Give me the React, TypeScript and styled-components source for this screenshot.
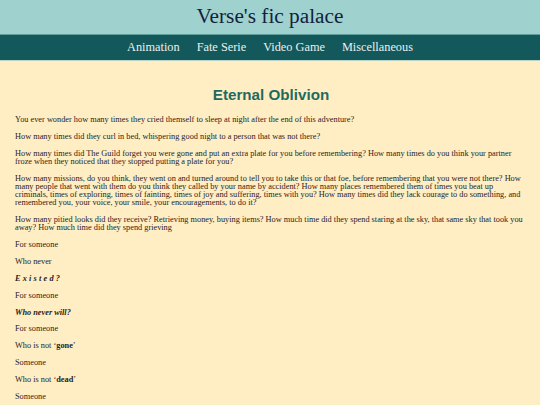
import React from 'react'
import styled, { createGlobalStyle } from 'styled-components'

const GlobalStyle = createGlobalStyle`
  html, body {
    margin: 0;
    padding: 0;
    background: #ffeec4;
  }
`

const Page = styled.div`
  width: 540px;
  min-height: 405px;
  background: #ffeec4;
  font-family: 'Liberation Serif', 'Times New Roman', serif;
`

const Header = styled.header`
  height: 35px;
  background: #9fd1cf;
  border-bottom: 1px solid #5f9d9a;
  display: flex;
  align-items: center;
  justify-content: center;
  box-sizing: border-box;
`

const SiteTitle = styled.h1`
  margin: 0;
  font-size: 21.3px;
  font-weight: normal;
  color: #13213d;
  line-height: 1;
`

const Nav = styled.nav`
  height: 26px;
  background: #13585a;
  display: flex;
  align-items: center;
  justify-content: center;
  gap: 17px;
  border-bottom: 1px solid #b9d2c4;
  box-sizing: border-box;
`

const NavLink = styled.a`
  color: #e9f1ef;
  font-size: 12.3px;
  text-decoration: none;
  cursor: pointer;
`

const Main = styled.main`
  padding: 24px 13px 0 15px;
`

const Title = styled.h2`
  margin: 0 0 12px;
  text-align: center;
  font-family: 'Liberation Sans', Arial, sans-serif;
  font-size: 15.2px;
  font-weight: bold;
  color: #1f6a60;
  line-height: 19px;
`

const Para = styled.p`
  margin: 0 0 8.65px;
  font-size: 8.3px;
  line-height: 8.2px;
  color: #2a231b;
`

const Spaced = styled.span`
  font-weight: bold;
  font-style: italic;
  letter-spacing: 2.2px;
`

const Strong = styled.b`
  font-weight: bold;
  font-style: ${(p: { $italic?: boolean }) => (p.$italic ? 'italic' : 'normal')};
`

const links = ['Animation', 'Fate Serie', 'Video Game', 'Miscellaneous']

export default function App() {
  return (
    <Page>
      <GlobalStyle />
      <Header>
        <SiteTitle>Verse's fic palace</SiteTitle>
      </Header>
      <Nav>
        {links.map((l) => (
          <NavLink key={l}>{l}</NavLink>
        ))}
      </Nav>
      <Main>
        <Title>Eternal Oblivion</Title>
        <Para>
          You ever wonder how many times they cried themself to sleep at night after the end of this adventure?
        </Para>
        <Para>How many times did they curl in bed, whispering good night to a person that was not there?</Para>
        <Para>
          How many times did The Guild forget you were gone and put an extra plate for you before remembering? How
          many times do you think your partner froze when they noticed that they stopped putting a plate for you?
        </Para>
        <Para>
          How many missions, do you think, they went on and turned around to tell you to take this or that foe, before
          remembering that you were not there? How many people that went with them do you think they called by your
          name by accident? How many places remembered them of times you beat up criminals, times of exploring, times
          of fainting, times of joy and suffering, times with you? How many times did they lack courage to do
          something, and remembered you, your voice, your smile, your encouragements, to do it?
        </Para>
        <Para>
          How many pitied looks did they receive? Retrieving money, buying items? How much time did they spend staring
          at the sky, that same sky that took you away? How much time did they spend grieving
        </Para>
        <Para>For someone</Para>
        <Para>Who never</Para>
        <Para>
          <Spaced>Existed?</Spaced>
        </Para>
        <Para>For someone</Para>
        <Para>
          <Strong $italic>Who never will?</Strong>
        </Para>
        <Para>For someone</Para>
        <Para>
          Who is not ‘<Strong>gone</Strong>’
        </Para>
        <Para>Someone</Para>
        <Para>
          Who is not ‘<Strong>dead</Strong>’
        </Para>
        <Para>Someone</Para>
      </Main>
    </Page>
  )
}
